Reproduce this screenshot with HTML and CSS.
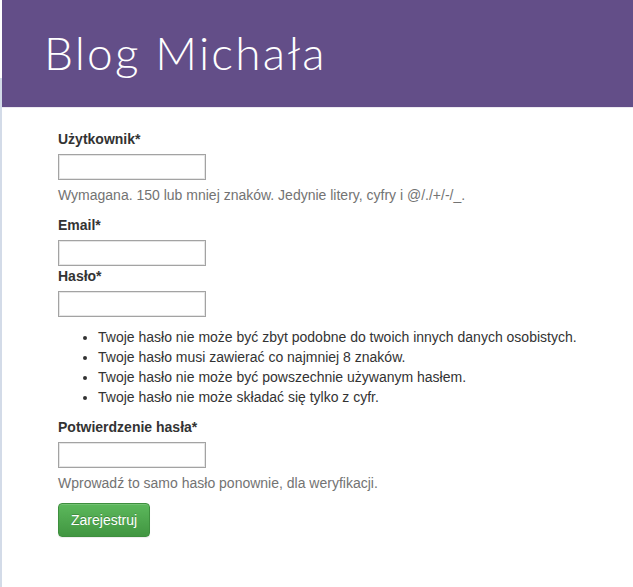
FILE: index.html
```html
<!DOCTYPE html>
<html lang="pl">
<head>
<meta charset="utf-8">
<title>Blog Michała</title>
<link rel="stylesheet" href="styles.css">
</head>
<body>
<div class="edge"></div>
<header class="page-header">
  <h1 class="brand">Blog Michała</h1>
</header>
<main class="content">
  <form class="form">
    <div class="field">
      <label class="label">Użytkownik*</label>
      <input class="input" type="text">
      <p class="help">Wymagana. 150 lub mniej znaków. Jedynie litery, cyfry i @/./+/-/_.</p>
    </div>
    <div class="field">
      <label class="label">Email*</label>
      <input class="input" type="email">
    </div>
    <div class="field">
      <label class="label">Hasło*</label>
      <input class="input" type="password">
      <ul class="rules">
        <li>Twoje hasło nie może być zbyt podobne do twoich innych danych osobistych.</li>
        <li>Twoje hasło musi zawierać co najmniej 8 znaków.</li>
        <li>Twoje hasło nie może być powszechnie używanym hasłem.</li>
        <li>Twoje hasło nie może składać się tylko z cyfr.</li>
      </ul>
    </div>
    <div class="field">
      <label class="label">Potwierdzenie hasła*</label>
      <input class="input" type="password">
      <p class="help">Wprowadź to samo hasło ponownie, dla weryfikacji.</p>
    </div>
    <button class="btn" type="button">Zarejestruj</button>
  </form>
</main>
</body>
</html>
```
FILE: styles.css
```css
html, body {
  margin: 0;
  padding: 0;
  background: #fff;
}
body {
  font-family: "Liberation Sans", Arial, sans-serif;
  font-size: 14px;
  line-height: 20px;
  color: #333;
  min-height: 587px;
}
.edge {
  position: absolute;
  left: 0;
  top: 78px;
  width: 2px;
  height: 509px;
  background: #d3dbe8;
}
.page-header {
  margin-left: 2px;
  height: 107px;
  background: #634e88;
  border-bottom: 1px solid #ece9f1;
  display: flex;
  align-items: center;
}
.brand {
  margin: 0 0 1px 42px;
  font-family: Lato, "Open Sans", sans-serif;
  font-weight: 300;
  font-size: 46px;
  letter-spacing: 2.2px;
  line-height: 1;
  color: #fff;
}
.content {
  padding: 21px 0 0 58px;
}
.form {
  display: flex;
  flex-direction: column;
  align-items: flex-start;
}
.field {
  display: flex;
  flex-direction: column;
  align-items: flex-start;
}
.label {
  font-weight: bold;
  margin-bottom: 5px;
}
.input {
  box-sizing: border-box;
  width: 148px;
  height: 26px;
  margin: 0;
  border: 1px solid #a3a3a3;
  box-shadow: inset 0 0 0 1px #e6e6e6;
  background: #fff;
}
.help {
  margin: 5px 0 10px;
  color: #737373;
}
.rules {
  margin: 10px 0 10px;
  padding-left: 40px;
}
.btn {
  margin-top: 0;
  padding: 6px 12px;
  font-family: "Liberation Sans", Arial, sans-serif;
  font-size: 14px;
  line-height: 20px;
  color: #fff;
  text-shadow: 0 -1px 0 rgba(0,0,0,0.2);
  background: linear-gradient(to bottom, #5cb85c 0%, #419641 100%);
  border: 1px solid #3e8f3e;
  border-radius: 4px;
  box-shadow: inset 0 1px 0 rgba(255,255,255,0.15), 0 1px 1px rgba(0,0,0,0.075);
  cursor: pointer;
}
```
